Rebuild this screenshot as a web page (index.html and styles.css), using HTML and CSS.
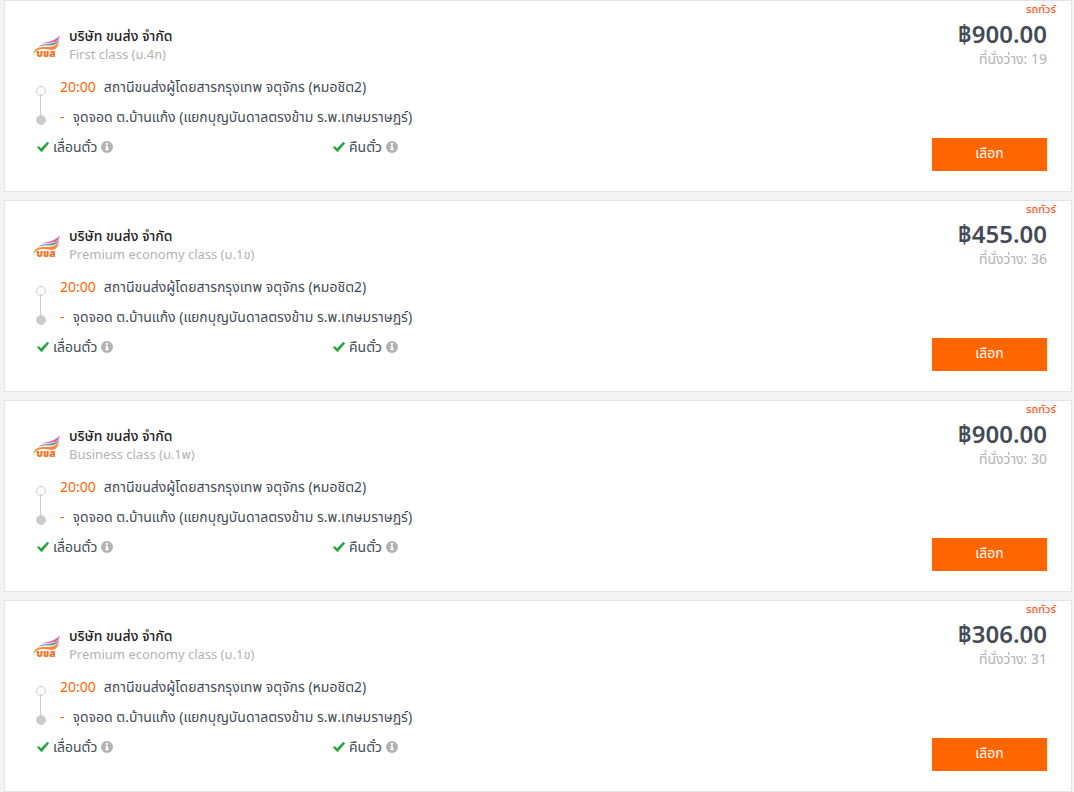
FILE: index.html
```
<!DOCTYPE html>
<html lang="th">
<head>
    <meta charset="utf-8">
    <title>รถทัวร์</title>
    <link rel="stylesheet" href="styles.css">
</head>

<body>
    <!-- shared icons -->
    <svg class="sprite" aria-hidden="true">
        <symbol id="logo" viewBox="0 0 28 24">
            <path d="M0 20C1 14.500 4 12.200 10 12C17 12.200 23 12 26 6.500C25 13 22 15.500 17 14.800C12 14 9 13.500 5 15C2.500 16 1 18 0 20Z" fill="#f58a3c"/>
            <path d="M9 9.500C13 6.500 17 7 21 5C24 3.500 25.500 2 26.800 0C26.500 4 24 6.500 20 7.300C16 8 12 8 9 9.500Z" fill="#e0559a"/>
            <path d="M5 12C10 8.500 16 9.200 20 8C23.500 7 25 5.500 26.300 3.500C25.500 8.500 22 10.300 18 10.500C13 10.300 9 10.500 5 12Z" fill="#6f93a3"/>
            <text x="13" y="22" text-anchor="middle">บขส</text>
        </symbol>
        <symbol id="check" viewBox="0 0 512 512">
            <path fill="#28a745" d="M174 459L7 293c-8-10-8-22 0-30l42-38c10-8 22-8 32 0l93 88L422 50c10-12 24-12 34-4l46 38c10 8 10 20 2 30L210 459c-10 10-26 10-36 0z"/>
        </symbol>
        <symbol id="info" viewBox="0 0 12 12">
            <circle cx="6" cy="6" r="6" fill="#b3b3b3"/>
            <path d="M5 2h2v2H5zM4.500 5H7v3h.700v1.200H4.300V8H5V6h-.500z" fill="#fff"/>
        </symbol>
    </svg>

    <main class="trips">
        <article class="trip">
            <div class="trip-info">
                <div class="company">
                    <svg class="logo" role="img" aria-label="บขส"><use href="#logo"/></svg>
                    <div>
                        <h2 class="company-name">บริษัท ขนส่ง จำกัด</h2>
                        <p class="class-name">First class (ม.4ก)</p>
                    </div>
                </div>
                <ul class="route">
                    <li><span class="time">20:00</span> สถานีขนส่งผู้โดยสารกรุงเทพ จตุจักร (หมอชิต2)</li>
                    <li><span class="time">-</span> จุดจอด ต.บ้านแก้ง (แยกบุญบันดาลตรงข้าม ร.พ.เกษมราษฎร์)</li>
                </ul>
                <div class="options">
                    <span class="option"><svg class="check"><use href="#check"/></svg>เลื่อนตั๋ว<svg class="info"><use href="#info"/></svg></span>
                    <span class="option"><svg class="check"><use href="#check"/></svg>คืนตั๋ว<svg class="info"><use href="#info"/></svg></span>
                </div>
            </div>
            <div class="trip-price">
                <span class="bus-type">รถทัวร์</span>
                <strong class="price">฿900.00</strong>
                <span class="seats">ที่นั่งว่าง: 19</span>
                <button type="button" class="select">เลือก</button>
            </div>
        </article>

        <article class="trip">
            <div class="trip-info">
                <div class="company">
                    <svg class="logo" role="img" aria-label="บขส"><use href="#logo"/></svg>
                    <div>
                        <h2 class="company-name">บริษัท ขนส่ง จำกัด</h2>
                        <p class="class-name">Premium economy class (ม.1ข)</p>
                    </div>
                </div>
                <ul class="route">
                    <li><span class="time">20:00</span> สถานีขนส่งผู้โดยสารกรุงเทพ จตุจักร (หมอชิต2)</li>
                    <li><span class="time">-</span> จุดจอด ต.บ้านแก้ง (แยกบุญบันดาลตรงข้าม ร.พ.เกษมราษฎร์)</li>
                </ul>
                <div class="options">
                    <span class="option"><svg class="check"><use href="#check"/></svg>เลื่อนตั๋ว<svg class="info"><use href="#info"/></svg></span>
                    <span class="option"><svg class="check"><use href="#check"/></svg>คืนตั๋ว<svg class="info"><use href="#info"/></svg></span>
                </div>
            </div>
            <div class="trip-price">
                <span class="bus-type">รถทัวร์</span>
                <strong class="price">฿455.00</strong>
                <span class="seats">ที่นั่งว่าง: 36</span>
                <button type="button" class="select">เลือก</button>
            </div>
        </article>

        <article class="trip">
            <div class="trip-info">
                <div class="company">
                    <svg class="logo" role="img" aria-label="บขส"><use href="#logo"/></svg>
                    <div>
                        <h2 class="company-name">บริษัท ขนส่ง จำกัด</h2>
                        <p class="class-name">Business class (ม.1พ)</p>
                    </div>
                </div>
                <ul class="route">
                    <li><span class="time">20:00</span> สถานีขนส่งผู้โดยสารกรุงเทพ จตุจักร (หมอชิต2)</li>
                    <li><span class="time">-</span> จุดจอด ต.บ้านแก้ง (แยกบุญบันดาลตรงข้าม ร.พ.เกษมราษฎร์)</li>
                </ul>
                <div class="options">
                    <span class="option"><svg class="check"><use href="#check"/></svg>เลื่อนตั๋ว<svg class="info"><use href="#info"/></svg></span>
                    <span class="option"><svg class="check"><use href="#check"/></svg>คืนตั๋ว<svg class="info"><use href="#info"/></svg></span>
                </div>
            </div>
            <div class="trip-price">
                <span class="bus-type">รถทัวร์</span>
                <strong class="price">฿900.00</strong>
                <span class="seats">ที่นั่งว่าง: 30</span>
                <button type="button" class="select">เลือก</button>
            </div>
        </article>

        <article class="trip">
            <div class="trip-info">
                <div class="company">
                    <svg class="logo" role="img" aria-label="บขส"><use href="#logo"/></svg>
                    <div>
                        <h2 class="company-name">บริษัท ขนส่ง จำกัด</h2>
                        <p class="class-name">Premium economy class (ม.1ข)</p>
                    </div>
                </div>
                <ul class="route">
                    <li><span class="time">20:00</span> สถานีขนส่งผู้โดยสารกรุงเทพ จตุจักร (หมอชิต2)</li>
                    <li><span class="time">-</span> จุดจอด ต.บ้านแก้ง (แยกบุญบันดาลตรงข้าม ร.พ.เกษมราษฎร์)</li>
                </ul>
                <div class="options">
                    <span class="option"><svg class="check"><use href="#check"/></svg>เลื่อนตั๋ว<svg class="info"><use href="#info"/></svg></span>
                    <span class="option"><svg class="check"><use href="#check"/></svg>คืนตั๋ว<svg class="info"><use href="#info"/></svg></span>
                </div>
            </div>
            <div class="trip-price">
                <span class="bus-type">รถทัวร์</span>
                <strong class="price">฿306.00</strong>
                <span class="seats">ที่นั่งว่าง: 31</span>
                <button type="button" class="select">เลือก</button>
            </div>
        </article>
    </main>
</body>
</html>
```
FILE: styles.css
```
* {
    box-sizing: border-box;
}

body {
    margin: 0;
    background: #f4f4f5;
    color: #454b54;
    font-family: "Noto Sans", "Noto Sans Thai", sans-serif;
    font-size: 14px;
    line-height: 18px;
}

.sprite {
    display: none;
}

.trips {
    display: grid;
    gap: 8px;
    padding: 0 2px 0 4px;
}

.trip {
    display: flex;
    justify-content: space-between;
    background: #fff;
    border: 1px solid #e2e2e7;
}

.trip-info {
    padding: 26px 0 29px 28px;
}

.company {
    display: flex;
    align-items: flex-end;
    gap: 8px;
    margin-bottom: 9px;
}

.logo {
    width: 28px;
    height: 24px;
    margin-bottom: 4px;
}

.logo,
.sprite text {
    font-size: 10px;
    font-weight: 900;
    fill: #f36f21;
}

.company-name {
    margin: 0;
    color: #222;
    font-size: 14px;
    font-weight: 500;
}

.class-name {
    margin: 0;
    color: #b3b3b3;
    font-size: 13px;
}

.route {
    margin: 0;
    padding: 0;
    list-style: none;
}

.route li {
    display: flex;
    align-items: center;
    position: relative;
    height: 30px;
    padding-left: 27px;
}

/* stop markers, joined by a line */
.route li::before {
    content: "";
    position: absolute;
    left: 3px;
    top: 14px;
    width: 8px;
    height: 8px;
    border: 1px solid #ccc;
    border-radius: 50%;
}

.route li:last-child::before {
    top: 13px;
    background: #ccc;
}

.route li:first-child::after {
    content: "";
    position: absolute;
    left: 7px;
    top: 22px;
    width: 1px;
    height: 22px;
    background: #ccc;
}

.time {
    margin-right: 8px;
    color: #ff6600;
}

.options {
    display: flex;
    height: 30px;
    padding-left: 4px;
}

.option {
    display: flex;
    align-items: center;
    gap: 4px;
    width: 296px;
}

.check,
.info {
    width: 12px;
    height: 12px;
}

.trip-price {
    display: flex;
    flex-direction: column;
    align-items: flex-end;
    padding: 0 24px 20px 0;
}

.bus-type {
    margin-right: -9px;
    color: #ff5a1f;
    font-size: 11px;
    font-weight: 500;
    line-height: 16px;
}

.price {
    font-size: 24px;
    font-weight: 600;
    line-height: 34px;
}

.seats {
    color: #b3b3b3;
    line-height: 16px;
}

.select {
    width: 115px;
    height: 33px;
    margin-top: auto;
    padding: 0 0 3px;
    border: 0;
    background: #ff6600;
    color: #fff;
    font: inherit;
    cursor: pointer;
}
```
